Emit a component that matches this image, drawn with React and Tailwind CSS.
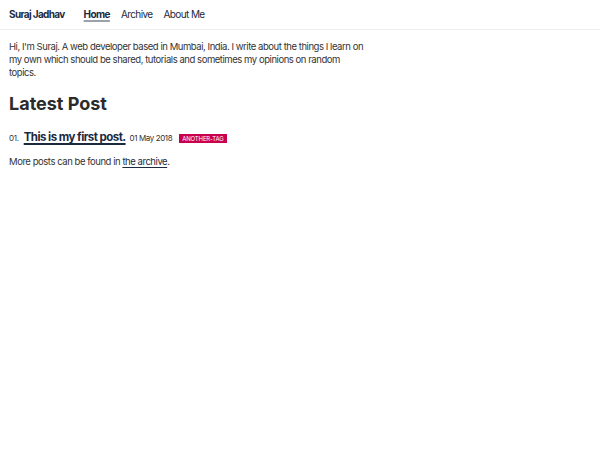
export default function App() {
  return (
    <div className="min-h-screen bg-white text-[#333333]" style={{ fontFamily: 'Inter, "Liberation Sans", sans-serif' }}>
      <nav className="h-[30px] flex items-center px-[9px] border-b border-[#eeeeee]">
        <span className="text-[10px] font-bold text-[#1b2a3f] tracking-[-0.65px]">Suraj Jadhav</span>
        <div className="flex items-center ml-[19px] gap-[11px] text-[10px] tracking-[-0.6px] text-[#1b2a3f]">
          <a className="font-bold underline decoration-[#9aa3ad] decoration-[1.5px] underline-offset-2">Home</a>
          <a>Archive</a>
          <a>About Me</a>
        </div>
      </nav>
      <main className="px-[9px] pt-[10px] max-w-[376px]">
        <p className="text-[9.5px] leading-[13px] tracking-[-0.45px] text-[#333333]">
          Hi, I'm Suraj. A web developer based in Mumbai, India. I write about the things I learn on my own which should be shared, tutorials and sometimes my opinions on random topics.
        </p>
        <h1 className="mt-[14px] text-[18px] leading-[22px] font-bold text-[#2b2b2b]">Latest Post</h1>
        <div className="mt-[14px] flex items-baseline">
          <span className="text-[8px] tracking-[-0.3px] text-[#333]">01.</span>
          <a className="ml-[5px] text-[11.5px] tracking-[-0.55px] font-bold text-[#1b2a3f] underline underline-offset-2 decoration-[1.5px]">This is my first post.</a>
          <span className="ml-[4px] text-[8px] tracking-[-0.4px] text-[#333]">01 May 2018</span>
          <span className="ml-[7px] px-[3px] py-[1px] bg-[#c8004e] text-white text-[6px] leading-[7px] tracking-[-0.15px] uppercase">another-tag</span>
        </div>
        <p className="mt-[9px] text-[9.5px] leading-[13px] tracking-[-0.45px]">
          More posts can be found in <a className="underline underline-offset-2 text-[#1b2a3f]">the archive</a>.
        </p>
      </main>
    </div>
  );
}
